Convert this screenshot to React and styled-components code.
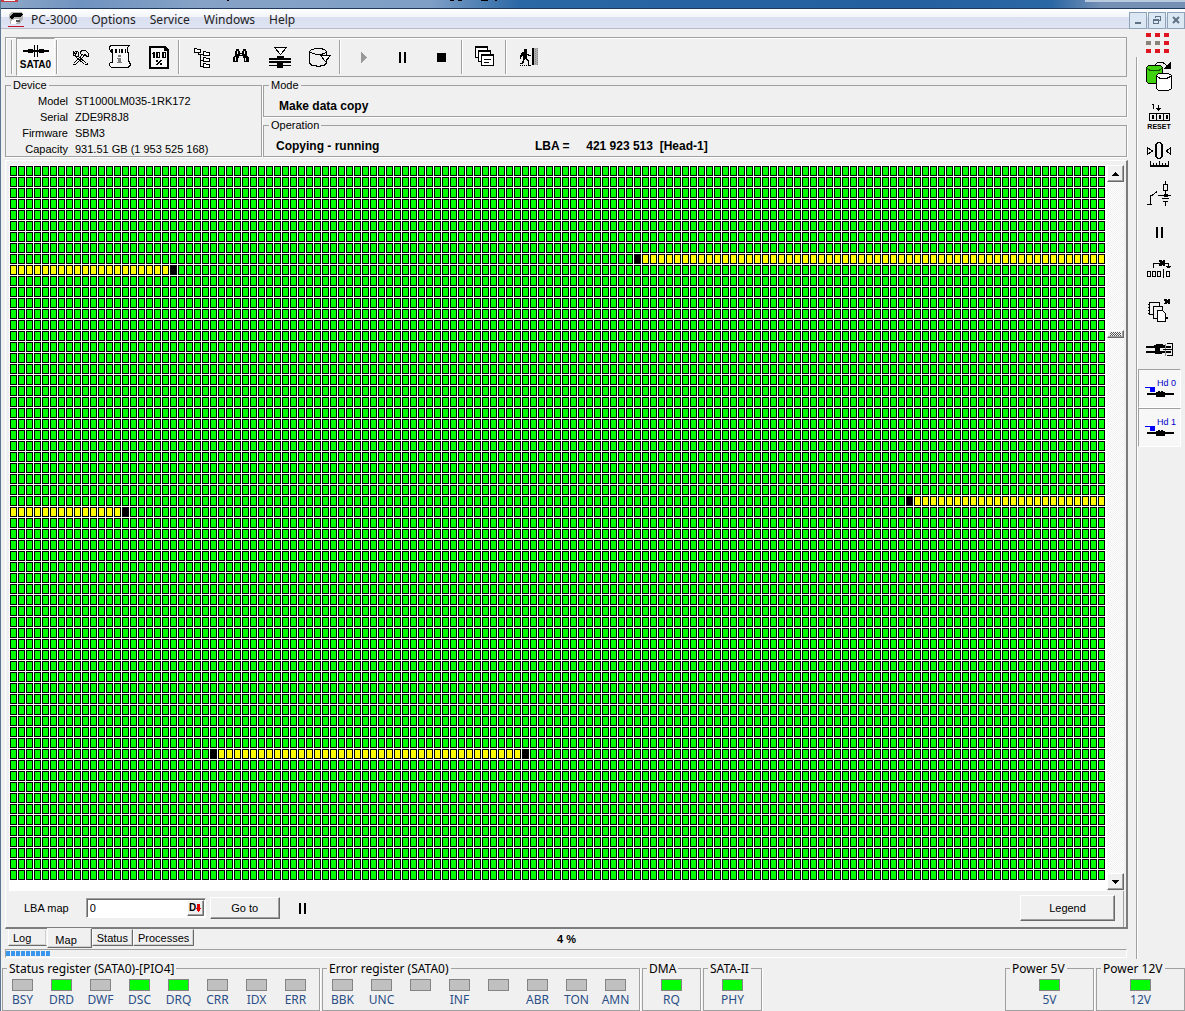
import styled, { createGlobalStyle, css } from "styled-components";

const GlobalStyle = createGlobalStyle`
  * {
    box-sizing: border-box;
  }
  body {
    margin: 0;
    background: #f0f0f0;
    color: #000;
    font-family: "Liberation Sans", Arial, sans-serif;
    font-size: 11px;
    line-height: 16px;
  }
  button, input {
    font: inherit;
    color: inherit;
  }
  svg {
    display: block;
    flex: none;
    overflow: visible;
  }
`;

const uiFont = css`
  font-family: "Noto Sans", "Open Sans", sans-serif;
  font-size: 12px;
`;

const raised = css`
  background: #f0f0f0;
  border: 1px solid;
  border-color: #fff #696969 #696969 #fff;
  box-shadow: inset -1px -1px 0 #a0a0a0;
`;

const Window = styled.div`
  display: flex;
  flex-direction: column;
  min-height: 100vh;
  border-left: 1px solid #5d7894;
`;

const TitleBar = styled.header`
  display: flex;
  justify-content: space-between;
  height: 9px;
  border-bottom: 1px solid #1d3a5c;
  background: linear-gradient(90deg, #8fa9c8 0, #6f93c0 80px, #86a2c6 200px, #7f9fc6 430px, #2a67a5 520px, #245f9f 900px, #2a67a5 1050px, #7590b4 1100px);
`;

const TitleEdge = styled.div`
  width: 100px;
  height: 2px;
  background: #b8cadd;
`;

const MenuBar = styled.nav`
  display: flex;
  align-items: center;
  height: 20px;
  padding-left: 7px;
  border-bottom: 1px solid #b9bcc6;
  background: linear-gradient(#fff 0, #f3f5fb 40%, #dadff1 45%, #dfe4f4 100%);
`;

const MenuItem = styled.button`
  ${uiFont}
  padding: 2px 0 0;
  margin-left: ${(p) => (p.$first ? 7 : 14)}px;
  border: 0;
  background: none;
  color: #222;
`;

const WindowButtons = styled.div`
  display: flex;
  gap: 1px;
  margin-left: auto;
  padding-top: 3px;
`;

const WindowButton = styled.button`
  display: flex;
  align-items: center;
  justify-content: center;
  width: 18px;
  height: 17px;
  padding: 0;
  border: 1px solid #8fa3b8;
  background: #dbe8f4;
`;

const Body = styled.div`
  display: flex;
  flex: 1;
`;

const Main = styled.main`
  flex: 1;
  min-width: 0;
  padding: 8px 8px 0 4px;
`;

const Toolbar = styled.div`
  display: flex;
  height: 40px;
  margin-right: 1px;
  padding-left: 5px;
  border: 1px solid #a0a0a0;
  box-shadow: inset 1px 1px 0 #fff;
`;

const Grip = styled.div`
  width: 2px;
  margin: 2px 3px 2px 0;
  border-left: 1px solid #a0a0a0;
  border-right: 1px solid #fff;
`;

const Separator = styled.div`
  width: 2px;
  margin: 2px 2px 2px 1px;
  border-left: 1px solid #a0a0a0;
  border-right: 1px solid #fff;
`;

const ToolButton = styled.button`
  display: flex;
  flex-direction: column;
  align-items: center;
  justify-content: center;
  width: 39px;
  padding: 0;
  border: 1px solid transparent;
  background: none;
  font-size: 10px;
  font-weight: bold;
  line-height: 10px;
  ${(p) =>
    p.$pressed &&
    css`
      border-color: #a0a0a0 #fff #fff #a0a0a0;
      background: #f7f7f7;
    `}
`;

const SataLabel = styled.span`
  padding-top: 2px;
`;

const Info = styled.div`
  display: flex;
  gap: 1px;
  margin: 2px 1px 3px 0;
`;

const Group = styled.fieldset`
  min-width: 0;
  margin: 0;
  padding: 0;
  border: 1px solid #a0a0a0;
  box-shadow: 1px 1px 0 #fff;

  legend {
    margin-left: 5px;
    padding: 0 2px;
    line-height: 12px;
  }
`;

const DeviceGroup = styled(Group)`
  width: 257px;
  height: 78px;
`;

const DeviceList = styled.dl`
  display: grid;
  grid-template-columns: 62px 1fr;
  column-gap: 7px;
  margin: 2px 0 0;

  dt {
    text-align: right;
  }
  dd {
    margin: 0;
    white-space: nowrap;
  }
`;

const InfoColumn = styled.div`
  display: flex;
  flex: 1;
  flex-direction: column;
  gap: 2px;
`;

const TextGroup = styled(Group)`
  height: 38px;
`;

const BoldLine = styled.div`
  display: flex;
  padding: ${(p) => (p.$indent ? "7px 0 0 15px" : "7px 0 0 12px")};
  font-size: 12px;
  font-weight: bold;
`;

const State = styled.span`
  flex: 0 1 259px;
`;

const Lba = styled.span`
  white-space: pre;
`;

const MapPanel = styled.section`
  padding: 4px 0 0 3px;
  border: 1px solid #fff;
  border-right: 2px solid #7c7c7c;
  border-bottom: 2px solid #7c7c7c;
`;

const MapArea = styled.div`
  display: flex;
  padding-right: 2px;
`;

const SectorMap = styled.div`
  display: grid;
  flex: 1;
  grid-template-columns: repeat(auto-fill, 8px);
  grid-auto-rows: 11px;
  padding: 1px 0 10px 1px;
  background: #fff;
`;

const sectorColors = { ok: "#00ff00", skipped: "#ffff00", fail: "#000" };

const Sector = styled.i`
  width: 7px;
  height: 10px;
  border: 1px solid #000;
  background: ${(p) => sectorColors[p.$state]};
`;

const ScrollBar = styled.div`
  display: flex;
  flex-direction: column;
  width: 17px;
  margin-bottom: 1px;
  background: repeating-conic-gradient(#fff 0 25%, #f0f0f0 0 50%) 0 0 / 2px 2px;
`;

const ScrollButton = styled.button`
  ${raised}
  display: flex;
  align-items: center;
  justify-content: center;
  height: 17px;
  padding: 0;
`;

const ScrollTrack = styled.div`
  flex: 1;
  padding-top: 148px;
`;

const ScrollThumb = styled.div`
  ${raised}
  height: 8px;
  padding: 1px;

  &::after {
    content: "";
    display: block;
    height: 4px;
    margin: 0 1px;
    background: repeating-conic-gradient(#555 0 25%, #f0f0f0 0 50%) 0 0 / 2px 2px;
  }
`;

const MapControls = styled.div`
  display: flex;
  align-items: center;
  height: 36px;
  margin-right: 2px;
  padding: 0 8px 2px 15px;
  border-right: 1px solid #a0a0a0;
`;

const Field = styled.div`
  display: flex;
  width: 120px;
  height: 20px;
  margin: 0 4px 0 17px;
  border: 1px solid;
  border-color: #a0a0a0 #fff #fff #a0a0a0;
  background: #fff;
  box-shadow: inset 1px 1px 0 #696969;

  input {
    flex: 1;
    min-width: 0;
    padding: 0 3px;
    border: 0;
    outline: 0;
    background: none;
  }
`;

const RadixButton = styled.button`
  ${raised}
  display: flex;
  align-items: center;
  justify-content: center;
  width: 17px;
  margin: 1px;
  padding: 0;
  font-size: 10px;
  font-weight: bold;
`;

const PushButton = styled.button`
  ${raised}
  width: ${(p) => p.$width}px;
  height: ${(p) => p.$height}px;
  padding: 0;
  margin-left: ${(p) => (p.$end ? "auto" : 0)};
`;

const PauseButton = styled.button`
  margin-left: 17px;
  padding: 0;
  border: 0;
  background: none;
`;

const TabRow = styled.div`
  display: grid;
  grid-template-columns: 1fr auto 1fr;
  height: 20px;
`;

const Tabs = styled.div`
  display: flex;
  align-items: flex-start;
  padding-left: 3px;
`;

const Tab = styled.button`
  height: ${(p) => (p.$active ? 20 : 17)}px;
  margin-top: ${(p) => (p.$active ? -1 : 0)}px;
  padding: ${(p) => (p.$active ? "3px 14px 0 7px" : "0 4px")};
  border: 1px solid;
  border-color: transparent #696969 #696969 #fff;
  background: #f0f0f0;
  box-shadow: inset -1px -1px 0 #d0d0d0;
  ${(p) =>
    p.$plain &&
    css`
      padding-right: 15px;
      border-right-color: transparent;
    `}
`;

const Percent = styled.strong`
  padding-top: 2px;
  font-size: 11px;
`;

const Progress = styled.div`
  display: flex;
  gap: 1px;
  height: 9px;
  padding: 1px 0;
  border: 1px solid;
  border-color: #a0a0a0 #fff #fff #a0a0a0;
  margin-right: 1px;
`;

const Chunk = styled.div`
  width: 4px;
  height: 5px;
  background: #3b97ee;
`;

const SideBar = styled.aside`
  display: flex;
  flex-direction: column;
  width: 49px;
`;

const Brand = styled.div`
  height: 28px;
  padding: 4px 0 0 10px;
`;

const SideTools = styled.div`
  flex: 1;
  padding: 0 4px 0 1px;
  border-left: 1px solid #a0a0a0;
  box-shadow: inset 1px 0 0 #fff;
`;

const SideButton = styled(ToolButton)`
  width: 43px;
  height: 39px;
  padding: 0 2px 2px 0;
`;

const StatusBar = styled.footer`
  display: flex;
  gap: 2px;
  padding: 1px 0 0 1px;
`;

const Register = styled(Group)`
  ${uiFont}
  height: 51px;
  ${(p) => p.$end && "margin-left: auto;"}

  legend {
    margin-left: 4px;
    padding-top: 2px;
    line-height: 14px;
    white-space: nowrap;
  }
`;

const Leds = styled.div`
  display: flex;
  justify-content: center;
  min-width: ${(p) => p.$min}px;
  padding: 3px ${(p) => (p.$min ? 0 : 4)}px 0 0;
`;

const LedCell = styled.div`
  display: flex;
  flex-direction: column;
  align-items: center;
  gap: 1px;
  width: 39px;
  color: #2b4f86;
`;

const Led = styled.span`
  width: 21px;
  height: 12px;
  border: 1px solid #848484;
  background: ${(p) => (p.$on ? "#00ff00" : "#c0c0c0")};
`;

const SECTORS = 8905;
const skippedRanges = [
  [1175, 1252],
  [4223, 4260],
  [7287, 7324],
];
const failed = [1174, 1253, 4222, 4261, 7286, 7325];

function sectorState(n) {
  if (failed.includes(n)) return "fail";
  if (skippedRanges.some(([from, to]) => n >= from && n <= to)) return "skipped";
  return "ok";
}

const sectors = Array.from({ length: SECTORS }, (_, n) => sectorState(n));

const device = [
  ["Model", "ST1000LM035-1RK172"],
  ["Serial", "ZDE9R8J8"],
  ["Firmware", "SBM3"],
  ["Capacity", "931.51 GB (1 953 525 168)"],
];

const statusBits = [
  ["BSY", false],
  ["DRD", true],
  ["DWF", false],
  ["DSC", true],
  ["DRQ", true],
  ["CRR", false],
  ["IDX", false],
  ["ERR", false],
];

const errorBits = ["BBK", "UNC", "", "INF", "", "ABR", "TON", "AMN"].map((name) => [name, false]);

function Icon({ children, width = 32, height = 32 }) {
  return (
    <svg
      width={width}
      height={height}
      viewBox={`0 0 ${width} ${height}`}
      fill="none"
      stroke="#000"
      shapeRendering="crispEdges"
      aria-hidden="true"
    >
      {children}
    </svg>
  );
}

const SataIcon = () => (
  <Icon width={28} height={14}>
    <path d="M1 6h26v2H1zM6 5h5v4H6zM17 5h5v4h-5z" fill="#000" stroke="none" />
    <path d="M12.500 1v12M15.500 1v12" />
    <path d="M13 1h2v4h-2zM13 10h2v3h-2z" fill="#f7f7f7" stroke="none" />
  </Icon>
);

const ToolsIcon = () => (
  <Icon>
    <path d="M9.500 22.500l9-9M11.500 23.500l9-9M9 23.500h3" />
    <path d="M12.500 13.500l10 9M11.500 15.500l9 8M21 23.500h2v-2" />
    <path d="M9.500 11v3l2 1h3v-3l-1-2h-2l1 2-1 1z" fill="#f0f0f0" />
    <path d="M16.500 10.500l2-1h3l3 3v3h-2l-1-2-2 1-3-2z" fill="#f0f0f0" />
  </Icon>
);

const ScrollIcon = () => (
  <Icon>
    <path d="M8.500 4.500h18l-2 2v3l1 4v6l2 4-1 2-2 1h-16l-2-2v-2l1-1h2v-9l-3-4v-3z" fill="#f7f7f7" />
    <path d="M8.500 8.500h1v3h-1zM12.500 8.500h1v3h-1zM16.500 8v4M18.500 8.500h1v3h-1zM22.500 8v4" />
    <path d="M15 14h3v2h-3zM14 17h4v4h1v1h-5v-1h1v-3h-1z" fill="#808080" stroke="none" />
  </Icon>
);

const PercentIcon = () => (
  <Icon>
    <path d="M7 5h16l4 4v19H7zM9 7v19h16V10h-3V7z" fill="#000" fillRule="evenodd" stroke="none" />
    <path d="M9 7h13v3h3v16H9z" fill="#f7f7f7" stroke="none" />
    <path d="M10 12h1v-1h2v6h-2v-4h-1zM14 11h4v6h-4zM20 11h4v6h-4z" fill="#000" stroke="none" />
    <path d="M16.500 12v4M22.500 12v4" stroke="#f7f7f7" />
    <path d="M14 19h2v2h-2zM18 22h2v2h-2zM18 19h2v1h-1v1h-1v1h-1v1h-1v1h-2v-1h1v-1h1v-1h1v-1h1z" fill="#000" stroke="none" />
  </Icon>
);

const TreeIcon = () => (
  <Icon>
    <path d="M8.500 7.500h2l1 1h3v3h-6zM17.500 10.500h2l1 1h3v3h-6zM17.500 16.500h2l1 1h3v3h-6zM17.500 22.500h2l1 1h3v3h-6z" fill="#fff" />
    <path d="M12.500 12v1.500h2v12M14 13.500h3M14 19.500h3M14 25.500h3" />
  </Icon>
);

const BinocularsIcon = () => (
  <Icon>
    <path d="M11 8h3v2h1v2h2v-2h1V8h3v2h1v4l2 3v4h-5v-4h-1v-2h-4v2h-1v4H8v-4l2-3v-4h1z" fill="#000" stroke="none" />
    <path d="M12.500 10v3M19.500 10v3M10.500 16v4M20.500 17v3M15 13.500h2" stroke="#f0f0f0" />
  </Icon>
);

const HeadIcon = () => (
  <Icon>
    <path d="M10.500 6.500h12l-6 7z" fill="#fff" />
    <path d="M5 17h8v-2h7v2h7v2H5zM5 20h22v2H5zM5 24h8v1H5zM19 24h8v1h-8zM13 22h6v5h-6z" fill="#000" stroke="none" />
  </Icon>
);

const DiskReadIcon = () => (
  <Icon>
    <path d="M6.500 10.500l2-2 5-1h4l4 1 2 2v4M6.500 10v12l2 2 5 1h4l4-1 2-2v-2M6.500 10.500l3 2 5 1h3l4-1 2-2" />
    <path d="M17.500 14.500h10l-5 6z" fill="#fff" />
  </Icon>
);

const PlayIcon = () => (
  <Icon>
    <path d="M14 11l6 5.500-6 5.500z" fill="#999" stroke="none" />
  </Icon>
);

const PauseIcon = () => (
  <Icon>
    <path d="M13 11h2v11h-2zM18 11h2v11h-2z" fill="#000" stroke="none" />
  </Icon>
);

const StopIcon = () => (
  <Icon>
    <path d="M12 12h9v9h-9z" fill="#000" stroke="none" />
  </Icon>
);

const CascadeIcon = () => (
  <Icon>
    <path d="M6.500 5.500h12v11h-12z" fill="#fff" />
    <path d="M6 6h13" strokeWidth="2" />
    <path d="M9.500 9.500h12v11h-12z" fill="#fff" />
    <path d="M9 10h13" strokeWidth="2" />
    <path d="M12.500 13.500h12v11h-12z" fill="#fff" />
    <path d="M12 14h13" strokeWidth="2" />
    <path d="M15 18.500h7M15 21.500h5" />
  </Icon>
);

const ExitIcon = () => (
  <Icon>
    <path d="M11 8h3v3h-3zM9 11h5v2h2v1h2v1h-3l-1-1v3l2 3v4h2v1h-3v-4l-3-3-1 3-2 2H7v-1h2l1-4v-3l-2 1v2H7v-3z" fill="#000" stroke="none" />
    <path d="M7 24.500h9" strokeDasharray="1 1" />
    <path d="M19 7h2v17h-2z" fill="#000" stroke="none" />
    <path d="M21 7h4v17h-4z" fill="#b0b0b0" stroke="none" />
    <path d="M22.500 8v16M24.500 7v17" stroke="#888" strokeDasharray="1 1" />
  </Icon>
);

const CopyDisksIcon = () => (
  <Icon>
    <path d="M3.500 7.500l2-2h12l2 2v14l-2 2h-12l-2-2z" fill="#3fd010" />
    <path d="M3.500 8l3 2h10l3-2" stroke="#0c5000" />
    <path d="M13.500 15.500l2-2h10l3 2v13l-3 2h-10l-2-2z" fill="#fff" />
    <path d="M13.500 16l3 2h8l4-2" />
    <path d="M12 4.500l3-2h5l4 3" />
    <path d="M28 1v8h-8z" fill="#000" stroke="none" />
  </Icon>
);

const ResetIcon = () => (
  <Icon>
    <path d="M9 5.500h1.500V10M15.500 6v6M13 9.500h5M14 10.500h3" />
    <path d="M6.500 14.500h20v7h-20zM13.500 14v8M20.500 14v8" />
    <path d="M9.500 16.500h1v3h-1zM16.500 16.500h1v3h-1zM23.500 16.500h1v3h-1z" />
    <text x="16" y="30" textAnchor="middle" fontSize="7" fontWeight="bold" fill="#000" stroke="none">
      RESET
    </text>
  </Icon>
);

const ZeroIcon = () => (
  <Icon>
    <path d="M14 4h4l2 3v11l-2 3h-4l-2-3V7zM15 5l-1 2v11l1 2h2l1-2V7l-1-2z" fill="#000" stroke="none" fillRule="evenodd" />
    <path d="M4.500 9.500v7l5-3.500zM27.500 9.500v7l-4-3.500z" />
    <path d="M7 27.500h19M7.500 23v4M10.500 25v2M13.500 25v2M16.500 23v4M19.500 25v2M22.500 25v2M25.500 23v4" />
    <path d="M7 28.500h19" />
  </Icon>
);

const CircuitIcon = () => (
  <Icon>
    <path d="M22.500 4v3M20.500 7.500h4v6h-4zM22.500 14v4M15 18.500h13M19 21.500h7M20 24.500h5M22.500 24v5" />
    <path d="M21 17h4v3h-4z" fill="#000" stroke="none" />
    <path d="M4 27.500h5M7.500 27v-9M7 18.500h2l5-4" />
  </Icon>
);

const SkipIcon = () => (
  <Icon>
    <path d="M4.500 16.500h3v5h-3zM9.500 16.500h3v5h-3zM14.500 16.500h3v5h-3zM20.500 14v9M23.500 16.500h3v5h-3z" />
    <path d="M10.500 13V8.500h15V13M23 11.500h5M24 12.500h3" />
    <path d="M16 5h2l1 1 1-1h2v2l-1 1 1 1v2h-2l-1-1-1 1h-2V9l1-1-1-1z" fill="#000" stroke="none" />
  </Icon>
);

const PagesIcon = () => (
  <Icon>
    <path d="M6.500 8.500h10v12h-10z" fill="#f0f0f0" />
    <path d="M5 10.500h2M5 13.500h2M5 16.500h2M5 19.500h2" />
    <path d="M10.500 12.500h9v12h-9z" fill="#f0f0f0" />
    <path d="M14.500 16.500h5l3 3v8h-8z" fill="#fff" />
    <path d="M21 5h2l1 1 1-1h2v2l-1 1 1 1v1h-2l-1-1-1 1h-2V9l1-1-1-1zM22 22h1v1h2v2h-2v1h-1z" fill="#000" stroke="none" />
  </Icon>
);

const HeadsIcon = () => (
  <Icon>
    <path d="M3 13h8v-1h2v-1h7v1h3v1h5v2H3zM3 18h9v-3h5v3h11v2h-9v1h-7v-1H3z" fill="#000" stroke="none" />
    <path d="M29.500 10v13M24 10.500h5M24 22.500h5" />
    <path d="M22.500 11v12" stroke="#888" />
    <path d="M20 16.500h9" />
  </Icon>
);

const HdIcon = ({ label }) => (
  <Icon>
    <text x="14" y="14" fontSize="9" fontWeight="normal" fill="#0000c8" stroke="none">
      {label}
    </text>
    <path d="M2 15.500h5" stroke="#0000ff" />
    <path d="M7 15h5v5H7z" fill="#0000ff" stroke="none" />
    <path d="M4 21h9v-1h2v-1h2v1h1v-1h2v1h2v1h9v2h-9v2h-9v-2H4z" fill="#000" stroke="none" />
  </Icon>
);

const sideTools = [
  ["Copy disks", CopyDisksIcon],
  ["Reset counter", ResetIcon],
  ["Recalibrate", ZeroIcon],
  ["Power", CircuitIcon],
  ["Pause", PauseIcon],
  ["Skip sectors", SkipIcon],
  ["Cancel pages", PagesIcon],
  ["Heads", HeadsIcon],
];

const toolGroups = [
  [
    ["Utilities", ToolsIcon],
    ["Log info", ScrollIcon],
    ["Report", PercentIcon],
  ],
  [
    ["Object tree", TreeIcon],
    ["Search", BinocularsIcon],
    ["Head map", HeadIcon],
    ["Read disk", DiskReadIcon],
  ],
  [
    ["Start", PlayIcon],
    ["Pause", PauseIcon],
    ["Stop", StopIcon],
  ],
  [["Windows", CascadeIcon]],
  [["Exit", ExitIcon]],
];

function LedGroup({ title, bits, min, end }) {
  return (
    <Register $end={end}>
      <legend>{title}</legend>
      <Leds $min={min}>
        {bits.map(([name, on], i) => (
          <LedCell key={i}>
            <Led $on={on} />
            {name}
          </LedCell>
        ))}
      </Leds>
    </Register>
  );
}

function App() {
  return (
    <Window>
      <GlobalStyle />
      <TitleBar>
        <Icon width={520} height={3}>
          <path d="M0 0h17v2H0z" fill="#c33b45" stroke="none" />
          <path d="M3 0h11v1H3z" fill="#fff" stroke="none" />
          <path d="M226 0h2v1h-2zM449 0h4v1h-4zM457 0h4v1h-4zM480 0h7v1h-7zM494 0h2v1h-2z" fill="#000" stroke="none" />
        </Icon>
        <TitleEdge />
      </TitleBar>
      <MenuBar>
        <Icon width={16} height={16}>
          <path d="M1 3l3-2h10l1 2v5l-3 5H2z" fill="#b4b4b4" stroke="none" />
          <path d="M2 5l4-3h7l2 1-3 3H7l-3 2-2-1z" fill="#000" stroke="none" />
          <path d="M3 10l4-2h4l-1 3-3 2H3z" fill="#fff" stroke="none" />
          <path d="M8 9h4v2H8z" fill="#555" stroke="none" />
          <path d="M0 15h16v1H0z" fill="#c4122c" stroke="none" />
        </Icon>
        <MenuItem $first>PC-3000</MenuItem>
        <MenuItem>Options</MenuItem>
        <MenuItem>Service</MenuItem>
        <MenuItem>Windows</MenuItem>
        <MenuItem>Help</MenuItem>
        <WindowButtons>
          <WindowButton aria-label="Minimize">
            <Icon width={10} height={10}>
              <path d="M2 7h6v2H2z" fill="#5f7184" stroke="none" />
            </Icon>
          </WindowButton>
          <WindowButton aria-label="Restore">
            <Icon width={10} height={10}>
              <path d="M3.500 3V1.500h5v4H7M1.500 4.500h5v4h-5zM1 5h6" stroke="#5f7184" />
            </Icon>
          </WindowButton>
          <WindowButton aria-label="Close">
            <Icon width={10} height={10}>
              <path d="M2 2l6 6M8 2l-6 6" stroke="#5f7184" strokeWidth="2" shapeRendering="auto" />
            </Icon>
          </WindowButton>
        </WindowButtons>
      </MenuBar>

      <Body>
        <Main>
          <Toolbar>
            <Grip />
            <ToolButton $pressed>
              <SataIcon />
              <SataLabel>SATA0</SataLabel>
            </ToolButton>
            {toolGroups.map((group, i) => [
              <Separator key={i} />,
              ...group.map(([name, Glyph]) => (
                <ToolButton key={name} aria-label={name}>
                  <Glyph />
                </ToolButton>
              )),
            ])}
          </Toolbar>

          <Info>
            <DeviceGroup>
              <legend>Device</legend>
              <DeviceList>
                {device.map(([name, value]) => [
                  <dt key={name}>{name}</dt>,
                  <dd key={value}>{value}</dd>,
                ])}
              </DeviceList>
            </DeviceGroup>
            <InfoColumn>
              <TextGroup>
                <legend>Mode</legend>
                <BoldLine $indent>Make data copy</BoldLine>
              </TextGroup>
              <TextGroup>
                <legend>Operation</legend>
                <BoldLine>
                  <State>Copying - running</State>
                  <Lba>{"LBA =     421 923 513  [Head-1]"}</Lba>
                </BoldLine>
              </TextGroup>
            </InfoColumn>
          </Info>

          <MapPanel>
            <MapArea>
              <SectorMap>
                {sectors.map((state, n) => (
                  <Sector key={n} $state={state} />
                ))}
              </SectorMap>
              <ScrollBar>
                <ScrollButton aria-label="Scroll up">
                  <Icon width={7} height={4}>
                    <path d="M3 0h1v1h1v1h1v1h1v1H0V3h1V2h1V1h1z" fill="#000" stroke="none" />
                  </Icon>
                </ScrollButton>
                <ScrollTrack>
                  <ScrollThumb />
                </ScrollTrack>
                <ScrollButton aria-label="Scroll down">
                  <Icon width={7} height={4}>
                    <path d="M0 0h7v1H6v1H5v1H4v1H3V3H2V2H1V1H0z" fill="#000" stroke="none" />
                  </Icon>
                </ScrollButton>
              </ScrollBar>
            </MapArea>
            <MapControls>
              <label htmlFor="lba">LBA map</label>
              <Field>
                <input id="lba" defaultValue="0" />
                <RadixButton aria-label="Decimal">
                  D
                  <Icon width={5} height={8}>
                    <path d="M1 0h3v4h1v1H4v2H3v1H2V7H1V5H0V4h1z" fill="#e00000" stroke="none" />
                  </Icon>
                </RadixButton>
              </Field>
              <PushButton $width={70} $height={22}>
                Go to
              </PushButton>
              <PauseButton aria-label="Pause map">
                <Icon width={10} height={11}>
                  <path d="M2 0h2v11H2zM7 0h2v11H7z" fill="#000" stroke="none" />
                </Icon>
              </PauseButton>
              <PushButton $width={95} $height={26} $end>
                Legend
              </PushButton>
            </MapControls>
          </MapPanel>

          <TabRow>
            <Tabs role="tablist">
              <Tab role="tab" $plain>
                Log
              </Tab>
              <Tab role="tab" aria-selected="true" $active>
                Map
              </Tab>
              <Tab role="tab">Status</Tab>
              <Tab role="tab">Processes</Tab>
            </Tabs>
            <Percent>4 %</Percent>
          </TabRow>
          <Progress role="progressbar" aria-valuenow={4}>
            {Array.from({ length: 9 }, (_, i) => (
              <Chunk key={i} />
            ))}
          </Progress>
        </Main>

        <SideBar>
          <Brand>
            <Icon width={24} height={21}>
              <path
                d="M0 0h5v4H0zM9 0h5v4H9zM18 0h5v4h-5zM18 8h5v4h-5zM0 16h5v4H0zM9 16h5v4H9zM18 16h5v4h-5z"
                fill="#e0141e"
                stroke="none"
              />
              <path d="M0 8h5v4H0zM9 8h5v4H9z" fill="#8a8478" stroke="none" />
            </Icon>
          </Brand>
          <SideTools>
            {sideTools.map(([name, Glyph]) => (
              <SideButton key={name} aria-label={name}>
                <Glyph />
              </SideButton>
            ))}
            <SideButton $pressed>
              <HdIcon label="Hd 0" />
            </SideButton>
            <SideButton $pressed>
              <HdIcon label="Hd 1" />
            </SideButton>
          </SideTools>
        </SideBar>
      </Body>

      <StatusBar>
        <LedGroup title="Status register (SATA0)-[PIO4]" bits={statusBits} />
        <LedGroup title="Error register (SATA0)" bits={errorBits} />
        <LedGroup title="DMA" bits={[["RQ", true]]} min={57} />
        <LedGroup title="SATA-II" bits={[["PHY", true]]} min={57} />
        <LedGroup title="Power 5V" bits={[["5V", true]]} min={87} end />
        <LedGroup title="Power 12V" bits={[["12V", true]]} min={87} />
      </StatusBar>
    </Window>
  );
}

export default App;
